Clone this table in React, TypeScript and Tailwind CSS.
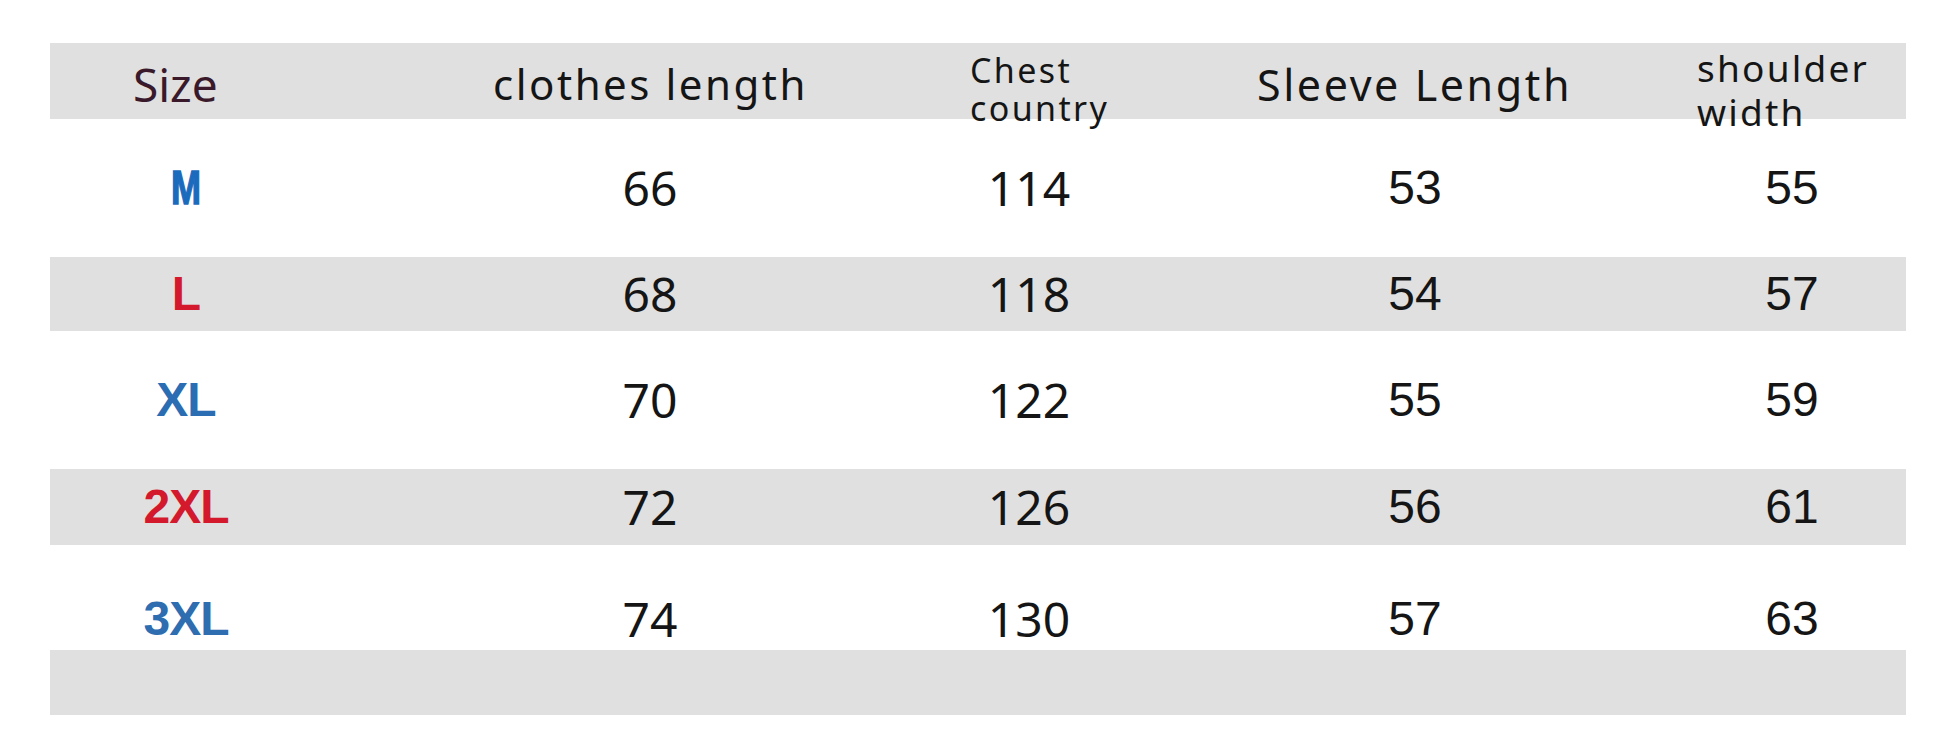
import React from "react";

const rows = [
  { size: "M", color: "text-[#1a6bbd]", cells: ["66", "114", "53", "55"], band: "white", h: "h-[138px]", narrow: true },
  { size: "L", color: "text-[#d3192b]", cells: ["68", "118", "54", "57"], band: "gray", h: "h-[74px]" },
  { size: "XL", color: "text-[#2a6db3]", cells: ["70", "122", "55", "59"], band: "white", h: "h-[138px]" },
  { size: "2XL", color: "text-[#d3192b]", cells: ["72", "126", "56", "61"], band: "gray", h: "h-[76px]" },
  { size: "3XL", color: "text-[#2d6db0]", cells: ["74", "130", "57", "63"], band: "white", h: "h-[105px] pt-[42px]" },
];

export default function App() {
  return (
    <div className="w-[1946px] h-[739px] bg-white pt-[43px] px-[40px] font-['Noto_Sans',sans-serif] text-[#151515]">
      <div className="w-[1856px] ml-[10px] flex flex-col">
        {/* header */}
        <div className="relative z-10 h-[76px] bg-[#e0e0e0] flex items-center pt-[6px]">
          <div className="w-[443px] pl-[83px] text-[46px] leading-none text-[#3a1a2a]">Size</div>
          <div className="w-[477px] text-[42px] leading-none tracking-[0.06em]">clothes length</div>
          <div className="w-[287px] text-[34px] leading-[38px] tracking-[0.07em] pt-[10px]">
            <div>Chest</div>
            <div>country</div>
          </div>
          <div className="w-[440px] text-[43px] leading-none tracking-[0.06em]">Sleeve Length</div>
          <div className="flex-1 text-[37px] leading-[44px] tracking-[0.06em] pt-[12px]">
            <div>shoulder</div>
            <div>width</div>
          </div>
        </div>

        {rows.map((r) => (
          <div
            key={r.size}
            className={`${r.h} ${r.band === "gray" ? "bg-[#e0e0e0]" : "bg-white"} grid grid-cols-[272px_656px_102px_670px_84px] items-center`}
          >
            <div className="flex justify-center">
              <span
                className={`inline-block font-['Liberation_Sans',Arial,sans-serif] font-bold text-[48px] leading-none tracking-[-0.02em] ${r.color} ${r.narrow ? "scale-x-75 [-webkit-text-stroke:1.5px_currentColor]" : ""}`}
              >
                {r.size}
              </span>
            </div>
            <div className="flex justify-center text-[48px] leading-none">{r.cells[0]}</div>
            <div className="flex justify-center text-[48px] leading-none whitespace-nowrap">{r.cells[1]}</div>
            <div className="flex justify-center text-[48px] leading-none font-['Liberation_Sans',Arial,sans-serif]">{r.cells[2]}</div>
            <div className="flex justify-center text-[48px] leading-none font-['Liberation_Sans',Arial,sans-serif]">{r.cells[3]}</div>
          </div>
        ))}

        <div className="h-[65px] bg-[#e0e0e0]" />
      </div>
    </div>
  );
}
